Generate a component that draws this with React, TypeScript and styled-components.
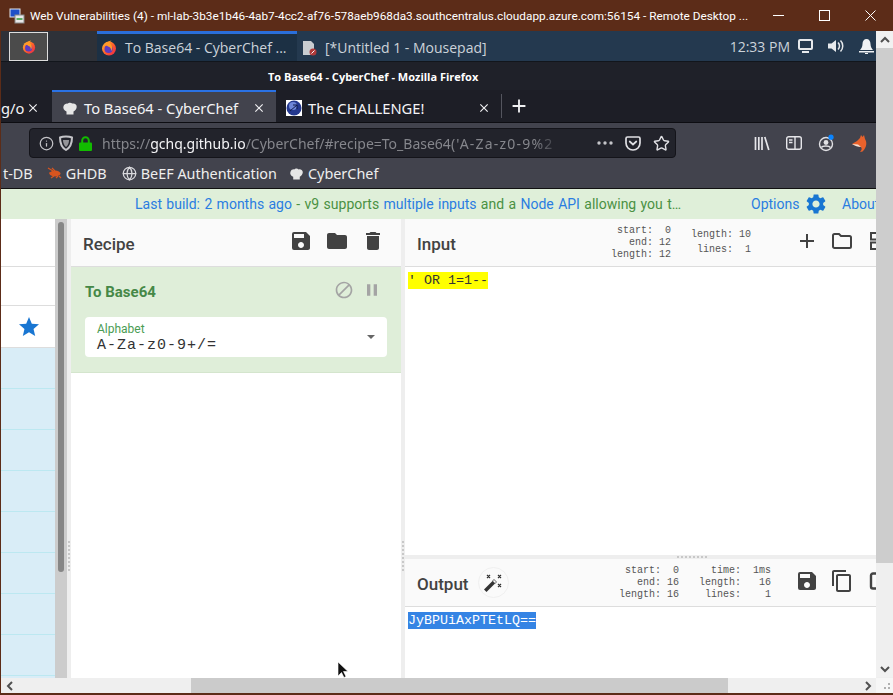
import React from "react";
import styled, { createGlobalStyle } from "styled-components";
import { MdSave, MdFolder, MdDelete, MdBlock, MdPause, MdStar, MdSettings, MdAdd, MdContentCopy, MdClose } from "react-icons/md";
import { Globe, Star, Info } from "lucide-react";

const Global = createGlobalStyle`
  html, body { margin: 0; padding: 0; background: #5c2c18; }
  * { box-sizing: border-box; }
`;

const Win = styled.div`
  width: 893px; height: 695px; overflow: hidden; display: flex; flex-direction: column;
  background: #5c2c18; font-family: "Open Sans", "Noto Sans", sans-serif; position: relative;
`;
const TitleBar = styled.div`
  height: 31px; flex: none; display: flex; align-items: center; padding-left: 9px; color: #fff; font-family: Roboto, sans-serif; font-size: 11.8px; background: #5c2c18;
  svg { flex: none; }
`;
const TitleText = styled.span` margin-left: 5px; width: 725px; flex: none; white-space: nowrap; `;
const WinBtn = styled.div`
  width: 46px; display: flex; justify-content: center; align-items: center; flex: none;
`;
const Middle = styled.div` flex: none; height: 647px; display: flex; padding-left: 1px; `;
const Remote = styled.div` width: 875px; height: 647px; display: flex; flex-direction: column; overflow: hidden; `;

const Panel = styled.div`
  height: 31px; flex: none; display: flex; background: #24394f; border-bottom: 1px solid #12161c; color: #ccd3da;
`;
const PanelLead = styled.div` width: 96px; flex: none; display: flex; background: #2e3138; padding: 1px 0 0 8px; `;
const StartBtn = styled.div`
  width: 39px; height: 29px; border: 1px solid #ddd; background: #4b4b4b; display: flex; align-items: center; justify-content: center;
`;
const Task = styled.div<{ $active?: boolean }>`
  width: ${p => (p.$active ? "200px" : "auto")}; display: flex; align-items: center; gap: 8px; padding-left: ${p => (p.$active ? "4px" : "5px")};
  font-family: "Open Sans", sans-serif; font-size: 14px; white-space: nowrap;
  background: ${p => (p.$active ? "#1c3044" : "transparent")};
  border-top: 3px solid ${p => (p.$active ? "#2a6fdb" : "transparent")};
`;
const Tray = styled.div` margin-left: auto; display: flex; align-items: center; font-size: 14px; gap: 15px; padding-right: 2px; `;
const Clock = styled.span` margin-right: -7px; `;

const WmTitle = styled.div`
  height: 28px; flex: none; background: #1f2129; color: #fff; font-weight: 700; font-size: 11px; display: flex; align-items: center; padding: 0 0 0 267px; white-space: nowrap;
`;
const TabBar = styled.div`
  height: 33px; flex: none; background: #1d1e26; display: flex; align-items: stretch; color: #f4f4f6; font-size: 14.7px; font-family: "Noto Sans", sans-serif;
  border-bottom: 1px solid #0d0d12; overflow: hidden;
`;
const Tab = styled.div<{ $w: number; $active?: boolean }>`
  width: ${p => p.$w}px; flex: none; display: flex; align-items: center; padding: 0 0 0 10px; white-space: nowrap;
  background: ${p => (p.$active ? "#42434d" : "transparent")};
  border-top: 2px solid ${p => (p.$active ? "#2a72e5" : "transparent")};
  height: 33px;
`;
const PartTab = styled(Tab)` padding-left: 0; `;
const TabLabel = styled.span<{ $w: number; $ml?: number }>` width: ${p => p.$w}px; flex: none; margin-left: ${p => p.$ml ?? 6}px; `;
const NewTab = styled.div` width: 35px; flex: none; display: flex; align-items: center; justify-content: center; align-self: center; height: 24px; border-left: 1px solid #54555e; `;

const NavBar = styled.div` height: 37px; flex: none; background: #42434d; display: flex; padding: 5px 0 0 28px; `;
const UrlBar = styled.div`
  width: 647px; height: 30px; background: #22232b; border: 1px solid #14141a; border-radius: 4px; display: flex; align-items: center; padding-left: 9px;
  color: #85868c; font-size: 14px; font-family: "Noto Sans", sans-serif; white-space: nowrap;
  svg { flex: none; }
`;
const UrlText = styled.span`
  margin-left: 10px; width: 460px; flex: none;
  mask-image: linear-gradient(to right, #000 94%, transparent 100%);
  b { color: #f4f4f6; font-weight: 400; }
  i { font-style: normal; letter-spacing: 1.2px; }
`;
const NavIcons = styled.div` display: flex; align-items: center; height: 30px; margin-left: 78px; gap: 16px; `;

const Bookmarks = styled.div`
  height: 29px; flex: none; background: #42434d; border-bottom: 1px solid #111; display: flex; align-items: center; color: #eee; font-size: 14.4px; font-family: "Noto Sans", sans-serif; white-space: nowrap; padding-bottom: 2px;
`;
const Mark = styled.div<{ $ml: number }>` display: flex; align-items: center; gap: 4px; margin-left: ${p => p.$ml}px; `;

const Banner = styled.div`
  height: 30px; flex: none; background: #dfefd9; display: flex; align-items: center; font-family: Roboto, sans-serif; font-size: 14px; color: #4a9143; white-space: nowrap; padding-left: 134px;
  a { color: #2a7de1; }
`;
const BannerText = styled.div` width: 616px; flex: none; word-spacing: 0.9px; `;
const OptionsLink = styled.span` color: #2a7de1; display: flex; align-items: center; gap: 5px; width: 91px; flex: none; `;

const Panes = styled.div` flex: 1; display: flex; min-height: 0; background: #fff; `;
const Ops = styled.div` width: 54px; flex: none; display: flex; flex-direction: column; background: #d9edf7; `;
const OpTop = styled.div<{ $h: number }>`
  height: ${p => p.$h}px; flex: none; background: #fff; border-bottom: 1px solid #ddd; display: flex; align-items: center; justify-content: flex-end; padding-right: 14px;
`;
const OpRow = styled.div` height: 41px; flex: none; background: #d9edf7; border-bottom: 1px solid #bce8f1; `;
const OpScroll = styled.div` width: 12px; flex: none; background: #ccc; padding: 3px 3px 0; `;
const OpThumb = styled.div` height: 350px; background: #868686; border-radius: 3px; `;
const Gutter = styled.div` width: 4px; flex: none; background: #eee; padding-top: 322px; display: flex; justify-content: center; `;
const Grip = styled.div`
  width: 2px; height: 31px; background: repeating-linear-gradient(to bottom, #c8c8c8 0 2px, transparent 2px 4px);
`;
const Recipe = styled.div` width: 330px; flex: none; display: flex; flex-direction: column; background: #fff; `;
const Head = styled.div`
  height: 48px; flex: none; background: #fafafa; border-bottom: 1px solid #ddd; display: flex; align-items: center; position: relative;
  font-family: Roboto, sans-serif; font-weight: 500; font-size: 17px; color: #424242;
`;
const HeadTitle = styled.span<{ $ml: number }>` margin-left: ${p => p.$ml}px; padding-top: 3px; `;
const IconRow = styled.div` display: flex; align-items: center; gap: 12px; margin-left: auto; color: #424242; padding-right: 16px; margin-top: -3px; `;
const Operation = styled.div`
  height: 106px; flex: none; background: #dfeed9; border-bottom: 1px solid #d4e5cd; padding: 0 14px;
`;
const OpHead = styled.div` height: 50px; display: flex; align-items: center; font-family: Roboto, sans-serif; font-weight: 700; font-size: 15px; color: #468847; `;
const OpIcons = styled.div` margin-left: auto; display: flex; gap: 8px; padding-right: 5px; color: #a4a4a4; margin-top: -5px; `;
const Field = styled.div` height: 40px; background: #fff; border-radius: 4px; padding: 6px 12px 0; position: relative; `;
const FieldLabel = styled.div` font-family: Roboto, sans-serif; font-size: 12px; line-height: 13px; color: #4a9c53; `;
const FieldValue = styled.div` font-family: "Liberation Mono", monospace; font-size: 15px; line-height: 17px; letter-spacing: 1px; color: #333; padding-top: 1px; `;
const Caret = styled.div` position: absolute; right: 12px; top: 18px; width: 0; height: 0; border: 4px solid transparent; border-top: 4px solid #666; `;

const Right = styled.div` flex: 1; min-width: 0; display: flex; flex-direction: column; overflow: hidden; `;
const Stats = styled.pre<{ $lh: number }>`
  margin: 0; font-family: "Liberation Mono", monospace; font-size: 10px; line-height: ${p => p.$lh}px; font-weight: 400; color: #555; text-align: right;
`;
const StatBlock = styled.div<{ $left: number; $top?: number }>` position: absolute; left: ${p => p.$left}px; top: ${p => p.$top ?? 6}px; `;
const CutIcons = styled.div` position: absolute; left: 390px; top: 10px; display: flex; gap: 11px; color: #424242; svg { flex: none; } `;
const InputBody = styled.div` height: 288px; flex: none; padding-top: 5px; font-family: "Liberation Mono", monospace; font-size: 13.33px; line-height: 17px; color: #333; white-space: pre; padding-left: 3px; `;
const Mark1 = styled.span` background: #ffff00; display: inline-block; `;
const Resizer = styled.div` height: 4px; flex: none; background: #eee; display: flex; padding-left: 272px; align-items: center; `;
const ResizerGrip = styled.div` width: 31px; height: 2px; background: repeating-linear-gradient(to right, #c8c8c8 0 2px, transparent 2px 4px); `;
const WandBtn = styled.div` width: 31px; height: 31px; border-radius: 50%; border: 1px solid #f0f0f0; display: flex; align-items: center; justify-content: center; margin-left: 9px; color: #333; `;
const OutputBody = styled.div` flex: 1; padding-top: 5px; padding-left: 3px; font-family: "Liberation Mono", monospace; font-size: 13.33px; line-height: 17px; `;
const Mark2 = styled.span` background: #3584e4; color: #fff; display: inline-block; `;

const VScroll = styled.div` width: 17px; flex: none; background: #efefef; display: flex; flex-direction: column; `;
const VArrow = styled.div<{ $end?: boolean }>` height: 17px; flex: none; background: #f1f1f1; display: flex; align-items: center; justify-content: center; margin-top: ${p => (p.$end ? "auto" : 0)}; margin-bottom: ${p => (p.$end ? "1px" : 0)}; `;
const VThumb = styled.div` height: 515px; flex: none; background: #cdcdcd; `;
const HScroll = styled.div` height: 15px; flex: none; background: #efefef; display: flex; margin-left: 1px; align-items: stretch; `;
const HArrow = styled.div<{ $end?: boolean }>` width: 17px; flex: none; display: flex; align-items: center; justify-content: center; margin-left: ${p => (p.$end ? "auto" : 0)}; `;
const HThumb = styled.div` width: 537px; flex: none; background: #cbcbcb; margin-left: 173px; `;
const Corner = styled.div` width: 17px; flex: none; display: flex; align-items: flex-end; justify-content: flex-end; padding: 0 1px 1px 0; background: #f6f6f6; `;
const Cursor = styled.svg` position: absolute; left: 337px; top: 661px; `;

const Firefox = ({ size = 16 }: { size?: number }) => (
  <svg width={size} height={size} viewBox="0 0 16 16">
    <defs>
      <linearGradient id="ffg" x1="0" y1="0" x2="1" y2="1">
        <stop offset="0" stopColor="#ffbd2e" />
        <stop offset=".55" stopColor="#ff5a2c" />
        <stop offset="1" stopColor="#e5214e" />
      </linearGradient>
    </defs>
    <circle cx="8" cy="8.6" r="7" fill="url(#ffg)" />
    <circle cx="7.6" cy="9" r="4.1" fill="#5d3bc0" />
    <path d="M3 6c2-1 3-.5 4 .5 2 .2 3.5 2 3 4.5 2-2 1.500-6-1.500-8C9 2 10 1 10.500.5 7 1 5 3 3 6z" fill="#ff9a28" />
  </svg>
);
const Hat = ({ size = 16 }: { size?: number }) => (
  <svg width={size} height={size} viewBox="0 0 16 16">
    <path d="M4.500 11.500C2 10.500.8 8.500 1.500 6.300 2.200 4 4.500 3.300 5.800 3.700 6.500 2.500 9 2.300 10.200 3.600 12.500 3 15 4.500 14.700 7c-.2 2-1.500 3.800-3.200 4.500v3h-7z" fill="#e6e6e6" />
  </svg>
);
const Pc = () => (
  <svg width="16" height="16" viewBox="0 0 16 16">
    <rect x="1" y="1" width="10" height="8" fill="#1f4fc8" stroke="#dfe3ea" />
    <rect x="6" y="7" width="9" height="8" fill="#e8e8e8" stroke="#8a8a8a" />
    <path d="M7.500 11h6" stroke="#2e9a3a" strokeWidth="1.500" />
  </svg>
);
const DocIcon = () => (
  <svg width="15" height="16" viewBox="0 0 15 16">
    <path d="M1 1h8l3 3v11H1z" fill="#c9ccd0" />
    <circle cx="11" cy="12" r="3.500" fill="#b03a3a" />
    <path d="M9.500 13.500l3-3" stroke="#fff" />
  </svg>
);
const Earth = () => (
  <svg width="16" height="16" viewBox="0 0 16 16">
    <rect width="16" height="16" fill="#fff" />
    <circle cx="8" cy="8" r="7.500" fill="#24388f" />
    <circle cx="7" cy="6" r="4" fill="#6e86d8" />
    <path d="M4 11l7-6M7 5h4v4" stroke="#111a4a" fill="none" />
  </svg>
);
const Bug = () => (
  <svg width="15" height="12" viewBox="0 0 15 12">
    <ellipse cx="8" cy="6.500" rx="5.500" ry="3" fill="#d8551f" />
    <path d="M1 1l5 3M5 1l3 3M4 11l3-2M9 11l2-2M12 9l2 2M2 6h3" stroke="#d8551f" strokeWidth="1.200" />
  </svg>
);
const Shield = () => (
  <svg width="14" height="16" viewBox="0 0 14 16">
    <path d="M1 2.500C4 1 10 1 13 2.500c0 6-1.500 10-6 12.500-4.500-2.500-6-6.500-6-12.500z" fill="none" stroke="#c4c4c8" strokeWidth="2" />
    <path d="M4 5h6c0 3-1 5.500-3 7-1.800-1.500-3-4-3-7z" fill="#c4c4c8" opacity=".7" />
  </svg>
);
const Lock = () => (
  <svg width="13" height="15" viewBox="0 0 13 15">
    <path d="M3.200 7V4.500a3.300 3.300 0 0 1 6.600 0V7" fill="none" stroke="#12bc00" strokeWidth="2" />
    <rect y="6.500" width="13" height="8.500" rx="1" fill="#12bc00" />
  </svg>
);
const Pocket = () => (
  <svg width="16" height="15" viewBox="0 0 16 15">
    <path d="M1 2.500C1 1.500 1.700 1 2.500 1h11c.8 0 1.500.5 1.500 1.500V7c0 4-3 7-7 7s-7-3-7-7z" fill="none" stroke="#e0e0e4" strokeWidth="1.700" />
    <path d="M4.700 5.500L8 8.500l3.300-3" fill="none" stroke="#e0e0e4" strokeWidth="1.700" strokeLinecap="round" />
  </svg>
);
const Library = () => (
  <svg width="16" height="15" viewBox="0 0 16 15" stroke="#e6e6ea" strokeWidth="1.700" fill="none">
    <path d="M1.500 1v13M4.800 1v13M8 1v13M10.800 1l4 13" />
  </svg>
);
const SidebarIcon = () => (
  <svg width="16" height="14" viewBox="0 0 16 14" fill="none" stroke="#e6e6ea" strokeWidth="1.400">
    <rect x=".7" y=".7" width="14.600" height="12.600" rx="2" />
    <path d="M9 1v12" />
    <path d="M3 4h3.500M3 6.500h3.500" />
  </svg>
);
const Account = () => (
  <svg width="18" height="18" viewBox="0 0 18 18">
    <circle cx="8" cy="10" r="6.500" fill="none" stroke="#e0e0e4" strokeWidth="1.400" />
    <circle cx="8" cy="8.500" r="2.400" fill="#e0e0e4" />
    <path d="M3.500 13.500c1-2 7.500-2 9 0" fill="none" stroke="#e0e0e4" strokeWidth="1.500" />
    <circle cx="13" cy="3.200" r="2.600" fill="#0a84ff" />
  </svg>
);
const Fox = () => (
  <svg width="16" height="17" viewBox="0 0 16 17">
    <path d="M0 9l5-3 3-3 1-3 1.500 2L12 0l1 4c2 3 2 8-2 12-1 1-2 1-3 .5 2-1.500 2-3 1-4.500-2-.5-5-1-9-3z" fill="#e8622c" />
    <path d="M0 9l6 .5 3 2.500C6 12 3 11 0 9z" fill="#f5e2d4" />
  </svg>
);
const Wand = () => (
  <svg width="20" height="20" viewBox="0 0 20 20">
    <path d="M1 16.500L11 6.500l2.500 2.500-10 10z" fill="#333" />
    <path d="M9.500 8l1.500-1.500 2.500 2.500-1.500 1.500z" fill="#fff" stroke="#333" strokeWidth=".6" />
    <path d="M4 2l3 3M7 2L4 5M15 2l3 3M18 2l-3 3M15 11l3 3M18 11l-3 3" stroke="#333" strokeWidth="1.200" />
  </svg>
);
const FolderLine = () => (
  <svg width="24" height="24" viewBox="0 0 24 24" fill="none" stroke="#424242" strokeWidth="2">
    <path d="M3 6.500c0-.8.700-1.500 1.500-1.500H9l2 2h8.500c.8 0 1.500.7 1.500 1.500v9c0 .8-.7 1.500-1.500 1.500h-15C3.700 19 3 18.300 3 17.500z" />
  </svg>
);
const Split = () => (
  <svg width="24" height="24" viewBox="0 0 24 24" fill="none" stroke="#424242" strokeWidth="2">
    <rect x="6" y="4" width="18" height="6.500" />
    <rect x="6" y="13.500" width="18" height="6.500" />
  </svg>
);
const OutlineBox = () => (
  <svg width="24" height="24" viewBox="0 0 24 24" fill="none" stroke="#424242" strokeWidth="2.400">
    <rect x="6" y="4.500" width="24" height="15" rx="2" />
  </svg>
);
const Chev = ({ d }: { d: string }) => (
  <svg width="10" height="8" viewBox="0 0 10 8" fill="none" stroke="#505050" strokeWidth="2">
    <path d={d} />
  </svg>
);

export default function App() {
  const rows = Array.from({ length: 8 });
  return (
    <Win>
      <Global />
      <TitleBar>
        <Pc />
        <TitleText>Web Vulnerabilities (4) - ml-lab-3b3e1b46-4ab7-4cc2-af76-578aeb968da3.southcentralus.cloudapp.azure.com:56154 - Remote Desktop ...</TitleText>
        <WinBtn>
          <svg width="11" height="11" viewBox="0 0 11 11"><path d="M0 5.500h11" stroke="#fff" /></svg>
        </WinBtn>
        <WinBtn>
          <svg width="11" height="11" viewBox="0 0 11 11"><rect x=".5" y=".5" width="10" height="10" fill="none" stroke="#fff" /></svg>
        </WinBtn>
        <WinBtn>
          <svg width="11" height="11" viewBox="0 0 11 11"><path d="M.5.5l10 10M10.500.5l-10 10" stroke="#fff" /></svg>
        </WinBtn>
      </TitleBar>
      <Middle>
        <Remote>
          <Panel>
            <PanelLead>
              <StartBtn><Firefox size={14} /></StartBtn>
            </PanelLead>
            <Task $active>
              <Firefox />
              <span>To Base64 - CyberChef ...</span>
            </Task>
            <Task>
              <DocIcon />
              <span>[*Untitled 1 - Mousepad]</span>
            </Task>
            <Tray>
              <Clock>12:33 PM</Clock>
              <svg width="15" height="14" viewBox="0 0 15 14"><rect x="1" y="1" width="13" height="9" rx="1" fill="none" stroke="#e6e9ec" strokeWidth="2" /><path d="M4 13h7" stroke="#e6e9ec" strokeWidth="2" /></svg>
              <svg width="16" height="14" viewBox="0 0 16 14"><path d="M0 4.500h3.500L8 1v12L3.500 9.500H0z" fill="#e6e9ec" /><path d="M10 3.500c2 2 2 5 0 7M12.500 1.500c3 3 3 8 0 11" fill="none" stroke="#e6e9ec" strokeWidth="1.500" /></svg>
              <svg width="15" height="16" viewBox="0 0 15 16"><path d="M7.500 1C5 1 3.500 3 3.500 6c0 3-1.500 5-2.500 6h13c-1-1-2.500-3-2.500-6 0-3-1.500-5-4-5z" fill="#f0f2f4" /><path d="M0 13h15v1.500H0zM6 15h3v1H6z" fill="#f0f2f4" /></svg>
            </Tray>
          </Panel>
          <WmTitle>To Base64 - CyberChef - Mozilla Firefox</WmTitle>
          <TabBar>
            <PartTab $w={51}>
              <TabLabel $w={25} $ml={0}>g/o</TabLabel>
              <MdClose size={14} color="#f0f0f2" />
            </PartTab>
            <Tab $w={224} $active>
              <Hat />
              <TabLabel $w={168}>To Base64 - CyberChef</TabLabel>
              <MdClose size={14} color="#f0f0f2" />
            </Tab>
            <Tab $w={225}>
              <Earth />
              <TabLabel $w={169}>The CHALLENGE!</TabLabel>
              <MdClose size={14} color="#f0f0f2" />
            </Tab>
            <NewTab><MdAdd size={22} color="#f0f0f2" /></NewTab>
          </TabBar>
          <NavBar>
            <UrlBar>
              <Info size={15} color="#c4c4c8" style={{ marginRight: 5 }} />
              <Shield />
              <span style={{ width: 6 }} />
              <Lock />
              <UrlText>https://<b>gchq.github.io</b>/CyberChef/#recipe=To_Base64<i>('A-Za-z0-9%2</i></UrlText>
              <svg width="16" height="4" viewBox="0 0 16 4" fill="#c4c4c8" style={{ marginRight: 12, marginLeft: 35 }}><circle cx="2" cy="2" r="1.700" /><circle cx="8" cy="2" r="1.700" /><circle cx="14" cy="2" r="1.700" /></svg>
              <Pocket />
              <Star size={17} color="#e0e0e4" strokeWidth={2} style={{ marginLeft: 12 }} />
            </UrlBar>
            <NavIcons>
              <Library />
              <SidebarIcon />
              <Account />
              <Fox />
            </NavIcons>
          </NavBar>
          <Bookmarks>
            <Mark $ml={2}>t-DB</Mark>
            <Mark $ml={14}><Bug />GHDB</Mark>
            <Mark $ml={15}><Globe size={15} color="#d8d8dc" />BeEF Authentication</Mark>
            <Mark $ml={12}><Hat size={15} />CyberChef</Mark>
          </Bookmarks>
          <Banner>
            <BannerText>
              <a>Last build: 2 months ago</a> - v9 supports <a>multiple inputs</a> and a <a>Node API</a> allowing you t…
            </BannerText>
            <OptionsLink>Options <MdSettings size={24} color="#1976d2" /></OptionsLink>
            <OptionsLink>About</OptionsLink>
          </Banner>
          <Panes>
            <Ops>
              <OpTop $h={48} />
              <OpTop $h={39} />
              <OpTop $h={42}><MdStar size={24} color="#1976d2" /></OpTop>
              {rows.map((_, i) => <OpRow key={i} />)}
            </Ops>
            <OpScroll><OpThumb /></OpScroll>
            <Gutter><Grip /></Gutter>
            <Recipe>
              <Head>
                <HeadTitle $ml={12}>Recipe</HeadTitle>
                <IconRow>
                  <MdSave size={24} /><MdFolder size={24} /><MdDelete size={24} />
                </IconRow>
              </Head>
              <Operation>
                <OpHead>
                  To Base64
                  <OpIcons><MdBlock size={20} /><MdPause size={20} /></OpIcons>
                </OpHead>
                <Field>
                  <FieldLabel>Alphabet</FieldLabel>
                  <FieldValue>A-Za-z0-9+/=</FieldValue>
                  <Caret />
                </Field>
              </Operation>
            </Recipe>
            <Gutter><Grip /></Gutter>
            <Right>
              <Head>
                <HeadTitle $ml={12}>Input</HeadTitle>
                <StatBlock $left={206}><Stats $lh={12}>{"start:  0\nend: 12\nlength: 12"}</Stats></StatBlock>
                <StatBlock $left={286} $top={8}><Stats $lh={15}>{"length: 10\nlines:  1"}</Stats></StatBlock>
                <CutIcons><MdAdd size={24} /><FolderLine /><Split /></CutIcons>
              </Head>
              <InputBody><Mark1>' OR 1=1--</Mark1></InputBody>
              <Resizer><ResizerGrip /></Resizer>
              <Head>
                <HeadTitle $ml={12}>Output</HeadTitle>
                <WandBtn><Wand /></WandBtn>
                <StatBlock $left={214}><Stats $lh={12}>{"start:  0\nend: 16\nlength: 16"}</Stats></StatBlock>
                <StatBlock $left={294}><Stats $lh={12}>{"time:  1ms\nlength:   16\nlines:    1"}</Stats></StatBlock>
                <CutIcons><MdSave size={24} /><MdContentCopy size={24} /><OutlineBox /></CutIcons>
              </Head>
              <OutputBody><Mark2>JyBPUiAxPTEtLQ==</Mark2></OutputBody>
            </Right>
          </Panes>
        </Remote>
        <VScroll>
          <VArrow><Chev d="M1 6l4-4 4 4" /></VArrow>
          <VThumb />
          <VArrow $end><Chev d="M1 2l4 4 4-4" /></VArrow>
        </VScroll>
      </Middle>
      <HScroll>
        <HArrow><svg width="8" height="10" viewBox="0 0 8 10" fill="none" stroke="#505050" strokeWidth="2"><path d="M6 1L2 5l4 4" /></svg></HArrow>
        <HThumb />
        <HArrow $end><svg width="8" height="10" viewBox="0 0 8 10" fill="none" stroke="#505050" strokeWidth="2"><path d="M2 1l4 4-4 4" /></svg></HArrow>
        <Corner>
          <svg width="12" height="10" viewBox="0 0 12 10" fill="#b0b0b0"><rect x="8" y="1" width="2" height="2" /><rect x="4" y="5" width="2" height="2" /><rect x="8" y="5" width="2" height="2" /></svg>
        </Corner>
      </HScroll>
      <Cursor width="12" height="18" viewBox="0 0 12 18">
        <path d="M1 1v14l3.500-3.500 2.500 5 2-1-2.500-5H11z" fill="#111" stroke="#fff" strokeWidth=".6" />
      </Cursor>
    </Win>
  );
}
